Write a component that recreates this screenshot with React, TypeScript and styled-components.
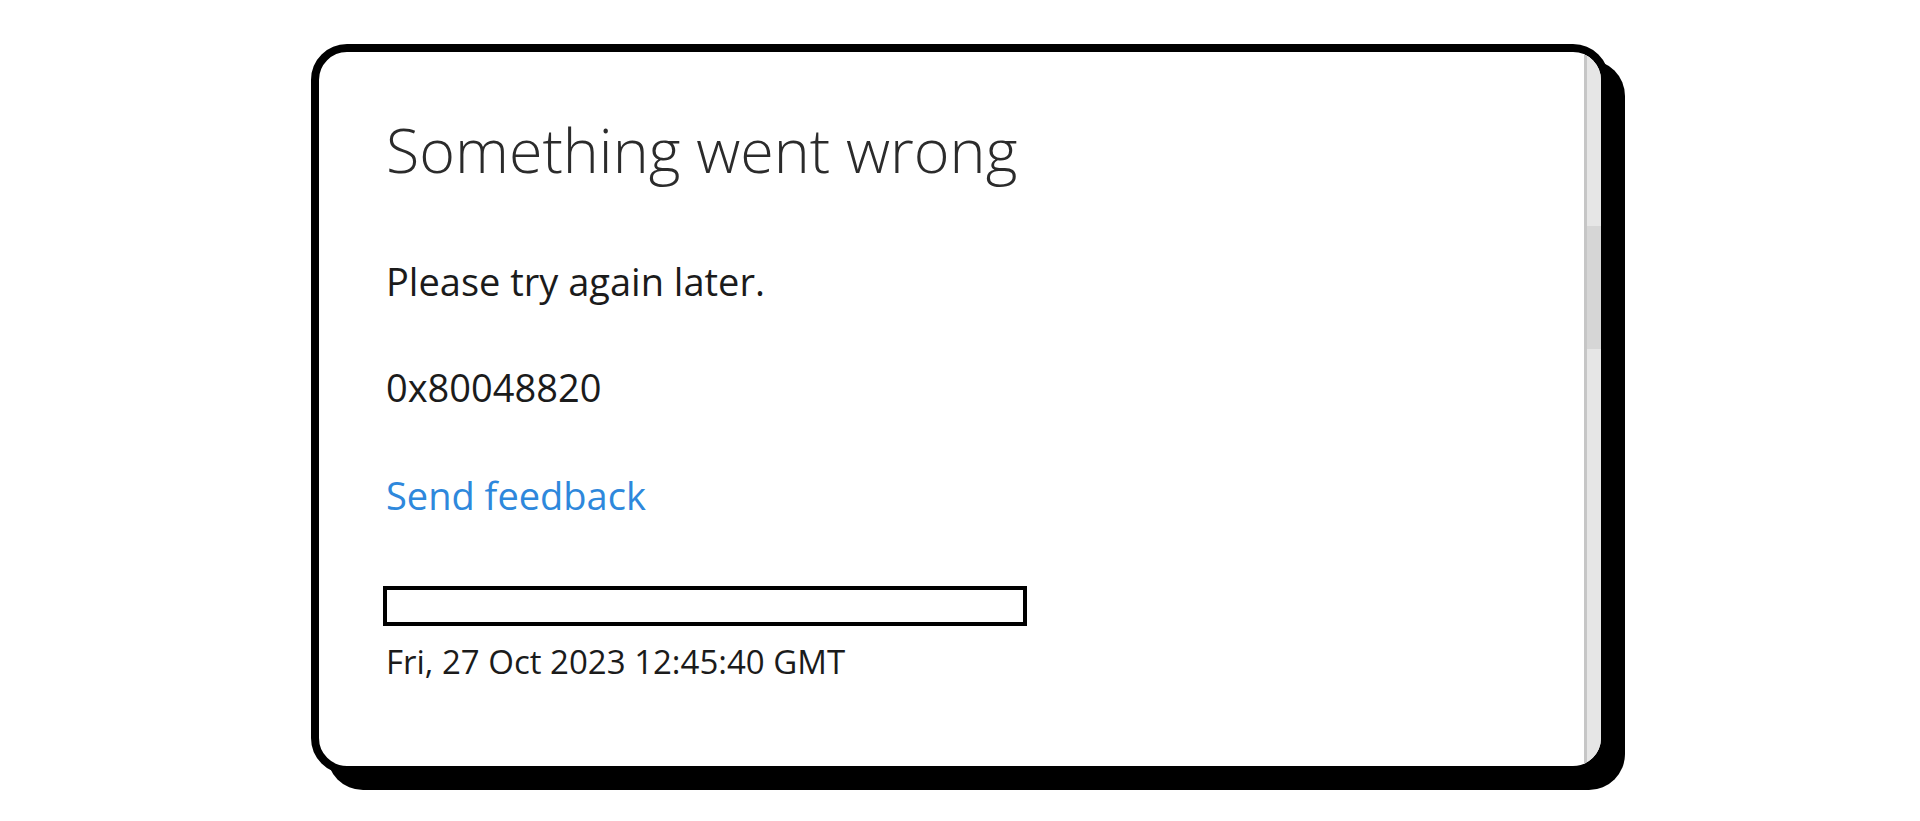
import React from "react";
import styled, { createGlobalStyle } from "styled-components";

const GlobalStyle = createGlobalStyle`
  html, body {
    margin: 0;
    padding: 0;
    background: #ffffff;
  }
  body {
    font-family: "Open Sans", "Noto Sans", sans-serif;
  }
`;

const Page = styled.div`
  width: 1920px;
  height: 821px;
  display: flex;
  justify-content: center;
  padding-top: 44px;
  box-sizing: border-box;
  background: #ffffff;
`;

const Card = styled.div`
  width: 1298px;
  height: 730px;
  box-sizing: border-box;
  border: 8px solid #000;
  border-radius: 36px;
  box-shadow: 16px 16px 0 0 #000;
  background: #fff;
  overflow: hidden;
  display: flex;
`;

const Content = styled.div`
  flex: 1;
  padding: 58px 0 0 67px;
  display: flex;
  flex-direction: column;
  align-items: flex-start;
  color: #1b1b1b;
`;

const Title = styled.h1`
  margin: 0 0 67px;
  font-size: 61px;
  font-weight: 300;
  line-height: 80px;
  color: #2b2b2b;
`;

const Line = styled.p<{ $gap?: number; $color?: string }>`
  margin: 0 0 ${(p) => p.$gap ?? 58}px;
  font-size: 38px;
  line-height: 48px;
  color: ${(p) => p.$color ?? "#1b1b1b"};
`;

const FeedbackLink = styled.a`
  font-size: 38px;
  line-height: 48px;
  color: #2e88dc;
  text-decoration: none;
  margin-bottom: 67px;
  cursor: pointer;
`;

const Redacted = styled.div`
  width: 644px;
  height: 40px;
  box-sizing: border-box;
  border: 4px solid #000;
  background: #fff;
  margin-left: -3px;
  margin-bottom: 16px;
`;

const Timestamp = styled.div`
  font-size: 33px;
  line-height: 40px;
  color: #1b1b1b;
`;

const Scrollbar = styled.div`
  width: 17px;
  background: #e6e6e6;
  border-left: 3px solid #c6c6c6;
  box-sizing: border-box;
  display: flex;
  flex-direction: column;
  padding-top: 174px;
`;

const Thumb = styled.div`
  height: 123px;
  background: #d6d6d6;
`;

export default function App() {
  return (
    <>
      <GlobalStyle />
      <Page>
        <Card>
          <Content>
            <Title>Something went wrong</Title>
            <Line>Please try again later.</Line>
            <Line $gap={60}>0x80048820</Line>
            <FeedbackLink>Send feedback</FeedbackLink>
            <Redacted />
            <Timestamp>Fri, 27 Oct 2023 12:45:40 GMT</Timestamp>
          </Content>
          <Scrollbar>
            <Thumb />
          </Scrollbar>
        </Card>
      </Page>
    </>
  );
}
